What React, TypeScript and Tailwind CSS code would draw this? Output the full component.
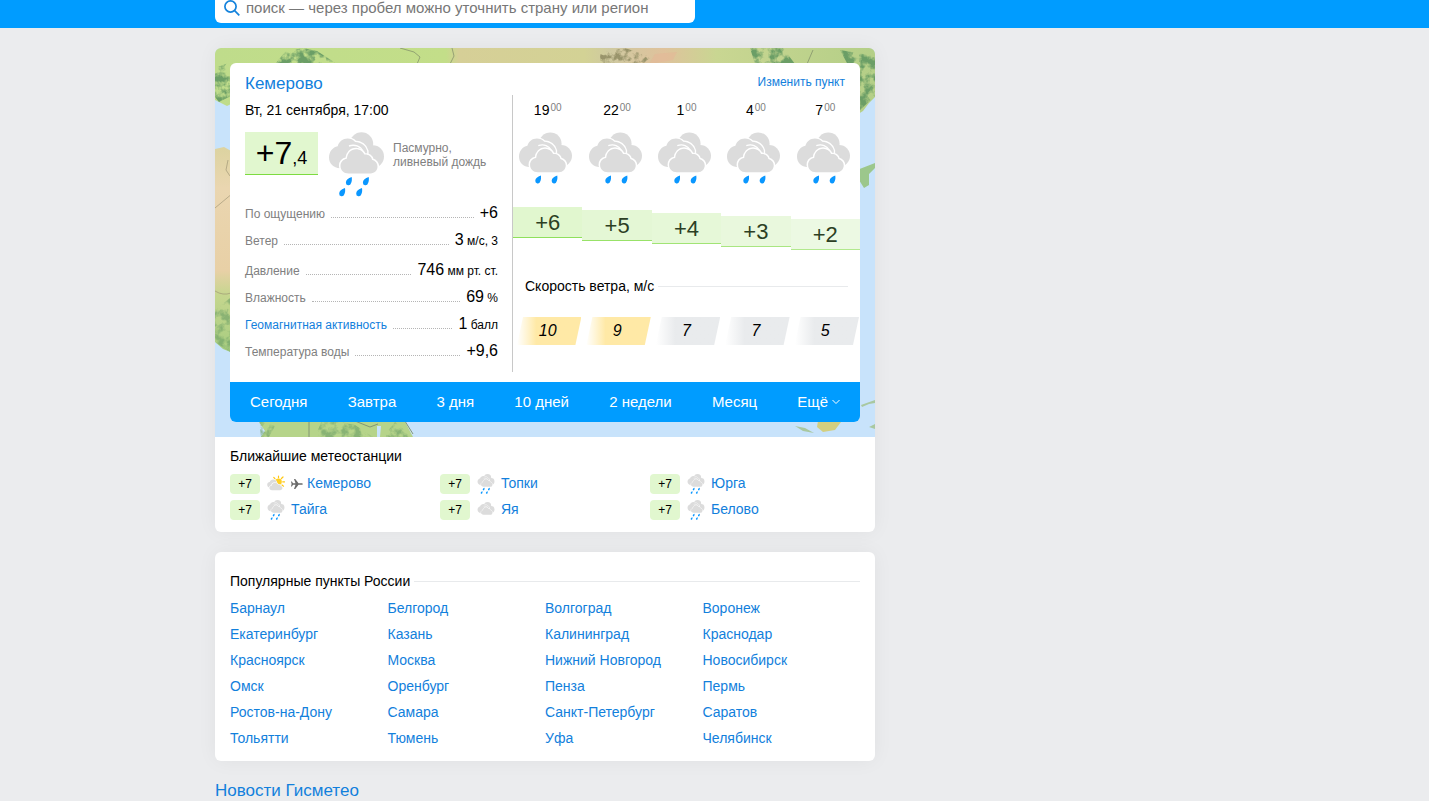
type CloudProps = { className: string; drops: 0 | 2 | 4 };

function CloudShapes() {
  return (
    <>
      <g fill="#dcdcdc">
        <circle cx="32.5" cy="12" r="11.7" />
        <circle cx="43.8" cy="24.5" r="11.2" />
        <circle cx="36" cy="22" r="10" />
      </g>
      <path
        d="M11 36.300C4.500 36 0 31.500 0 25.500C0 19.500 3.800 15.200 8.700 14.200C10 9.500 14 6.600 18.500 6.600C21.600 6.600 24.300 7.800 26.200 9.900C32 10 36.800 13.500 38.200 19L38 30L13 36.300Z"
        fill="#dcdcdc"
        stroke="#fff"
        strokeWidth="2.8"
        paintOrder="stroke"
      />
      <path
        d="M20 14C25.500 12 31.500 14 34 19.500"
        fill="none"
        stroke="#fff"
        strokeWidth="1.4"
      />
      <path
        d="M19.700 41.500C14.500 41.500 11.500 38 11.500 34C11.500 30.200 14 27.500 17.800 26.800C18.500 21 22 17.300 27 17.300C31 17.300 34 19.500 35.400 22.600C39.500 22.300 42.500 24.500 43 27.800C46.500 29 48.500 31.200 48.500 34.600C48.500 38.500 45.500 41.500 41.500 41.500Z"
        fill="#dcdcdc"
        stroke="#fff"
        strokeWidth="3.2"
        paintOrder="stroke"
      />
    </>
  );
}

const dropPlaces = [
  [22.7, 45],
  [39.7, 45],
  [16, 56],
  [33, 56],
];

function Cloud({ className, drops }: CloudProps) {
  return (
    <svg viewBox="0 0 55 65" className={className} aria-hidden="true">
      <CloudShapes />
      {dropPlaces.slice(0, drops).map(([x, y]) => (
        <path
          key={`${x}-${y}`}
          transform={`translate(${x} ${y})`}
          d="M0 0C-3.500 1.200-5.800 3-5.800 5.400A2.600 2.600 0 0 0-.7 6.300C.2 4.600.4 2.500 0 0Z"
          fill="#0a97ff"
        />
      ))}
    </svg>
  );
}

function SunCloud({ className }: { className: string }) {
  return (
    <svg viewBox="0 0 18 20" className={className} aria-hidden="true">
      <g stroke="#ffc814" strokeWidth="1.200" strokeLinecap="round">
        <path d="M11.500 2.200v1.500M6.800 3.400l1.200 1.400M16 3l-1.600 1.500M17.500 7.800h-1.800M16.500 12.200l-1.500-1.200" />
      </g>
      <circle cx="11.500" cy="7.800" r="3.300" fill="#ffcf24" />
      <path
        d="M3 13.500C1.200 13.500.2 12.300.2 10.800C.2 9.200 1.400 8.200 2.700 8.100C3.200 6.400 4.500 5.400 6.200 5.400C8 5.400 9.200 6.500 9.600 7.900L10 13.500Z"
        fill="#dcdcdc"
        stroke="#fff"
        strokeWidth="1"
        paintOrder="stroke"
      />
      <path
        d="M5 16.300C3.300 16.300 2.400 15.200 2.400 14C2.400 12.800 3.200 12 4.500 11.700C4.900 9.800 6.300 8.800 8 8.800C9.500 8.800 10.600 9.500 11.100 10.500C12.600 10.400 13.600 11.100 13.800 12.100C14.900 12.400 15.400 13.200 15.400 14.100C15.400 15.400 14.400 16.300 13 16.300Z"
        fill="#dcdcdc"
        stroke="#fff"
        strokeWidth="1.200"
        paintOrder="stroke"
      />
    </svg>
  );
}

function Plane() {
  return (
    <svg viewBox="0 0 24 20" className="h-2.5 w-3 shrink-0" aria-label="Аэропорт" role="img">
      <path
        d="M23.500 10c0-1.100-.9-1.700-2-1.700h-6.500L8.500 0H6l3 8.300H4L1.800 5H0l1.200 5L0 15h1.800L4 11.700h5L6 20h2.500l6.500-8.300h6.500c1.100 0 2-.6 2-1.700z"
        fill="#6a6a6a"
      />
    </svg>
  );
}

function MapPicture() {
  return (
    <svg
      viewBox="0 0 660 389"
      preserveAspectRatio="none"
      className="absolute inset-0 h-full w-full"
      aria-hidden="true"
    >
      <defs>
        <linearGradient id="land" x1="0" x2="1" y1="0" y2="0">
          <stop offset="0" stopColor="#bfdc8b" />
          <stop offset=".35" stopColor="#c3de89" />
          <stop offset=".37" stopColor="#d6cf97" />
          <stop offset=".56" stopColor="#d3d295" />
          <stop offset=".6" stopColor="#cfc9a0" />
          <stop offset=".68" stopColor="#dfc29c" />
          <stop offset=".76" stopColor="#c9d692" />
          <stop offset="1" stopColor="#b4cf87" />
        </linearGradient>
        <linearGradient id="west" x1="0" x2="0" y1="0" y2="1">
          <stop offset="0" stopColor="#dcd3a0" />
          <stop offset=".2" stopColor="#ead6b0" />
          <stop offset=".6" stopColor="#e8d0a6" />
          <stop offset=".72" stopColor="#c5d68e" />
          <stop offset="1" stopColor="#a6cc7f" />
        </linearGradient>
        <filter id="relief" x="0" y="0" width="1" height="1" colorInterpolationFilters="sRGB">
          <feTurbulence type="fractalNoise" baseFrequency=".11" numOctaves="4" seed="5" />
          <feColorMatrix values="0 0 0 0 .42  0 0 0 0 .62  0 0 0 0 .4  0 4 0 0 -1.600" />
          <feComposite in2="SourceGraphic" operator="in" />
        </filter>
        <filter id="umber" x="0" y="0" width="1" height="1" colorInterpolationFilters="sRGB">
          <feTurbulence type="fractalNoise" baseFrequency=".15" numOctaves="4" seed="9" />
          <feColorMatrix values="0 0 0 0 .6  0 0 0 0 .58  0 0 0 0 .42  0 4 0 0 -1.800" />
          <feComposite in2="SourceGraphic" operator="in" />
        </filter>
      </defs>
      <rect width="660" height="389" fill="#c8e3fb" />
      <path d="M0 0H660V49L654 55L648 63L640 68V30H20V54L12 58L0 52Z" fill="url(#land)" />
      <path d="M0 20L16 14V48L4 54L0 49ZM70 4L88 0L102 3L122 16H60Z" filter="url(#relief)" fill="#fff" />
      <path d="M535 0H568L580 16H540ZM625 2L660 8V48L645 62L640 30Z" filter="url(#relief)" fill="#fff" />
      <path d="M385 5L410 0L436 9L428 16H385Z" filter="url(#umber)" fill="#fff" />
      <path d="M440 6L462 4L458 12L434 16Z" fill="#e5b595" opacity=".5" />
      <path d="M185 0L199 4L205 9L202 16M237 0L239 8L235 16M598 2L592 16" fill="none" stroke="#7e8a68" strokeWidth="1" opacity=".7" />
      <path d="M0 101L9 99L18 104V305L8 301L0 294Z" fill="url(#west)" />
      <path d="M0 160L18 145M0 243Q8 248 16 245M13 112L11 122L15 128" fill="none" stroke="#97906f" strokeWidth="1" opacity=".6" />
      <path d="M0 262L15 250V304L0 294Z" filter="url(#relief)" fill="#fff" opacity=".6" />
      <path d="M42 371L188 370L198 389H46L50 383Z" fill="#b6d48a" />
      <path d="M44 372L60 378L54 389H46ZM108 370L140 377L158 389H100ZM180 374L198 389H168Z" filter="url(#relief)" fill="#fff" opacity=".6" />
      <path d="M94 370V389M140 373L155 379L163 376M188 370L198 386" fill="none" stroke="#829675" strokeWidth="1" />
      <path d="M162 378H166L165 389H162Z" fill="#c8e3fb" />
      <path d="M642 122L660 115V120L654 126V137L649 140L644 132Z" fill="#9cc78c" />
      <path d="M603 373L626 374L620 382L608 384L602 379Z" fill="#d3cf80" />
      <path d="M580 378L590 380L599 385L588 383ZM646 357L660 352V355L654 356L647 359ZM654 379L660 376V381Z" fill="#a9c8a0" />
    </svg>
  );
}

const details = [
  { label: "По ощущению", value: "+6", unit: "", row: "h-[27px]" },
  { label: "Ветер", value: "3", unit: "м/с, 3", row: "mb-[3px] h-[27px]" },
  { label: "Давление", value: "746", unit: "мм рт. ст.", row: "h-[27px]" },
  { label: "Влажность", value: "69", unit: "%", row: "h-[27px]" },
  { label: "Геомагнитная активность", value: "1", unit: "балл", row: "h-[27px]", link: true },
  { label: "Температура воды", value: "+9,6", unit: "", row: "h-[27px]" },
];

const calm = "from-white to-[#e9ebed]";
const windy = "from-white to-[#ffe9a6]";

const forecast = [
  { hour: "19", temp: "+6", wind: "10", tempClass: "border-[#8fe05c] bg-[#e1f7cf]", windClass: windy },
  { hour: "22", temp: "+5", wind: "9", tempClass: "mt-[3px] border-[#98e268] bg-[#e4f7d5]", windClass: windy },
  { hour: "1", temp: "+4", wind: "7", tempClass: "mt-[6px] border-[#a1e475] bg-[#e6f8d8]", windClass: calm },
  { hour: "4", temp: "+3", wind: "7", tempClass: "mt-[9px] border-[#a9e681] bg-[#e9f8dd]", windClass: calm },
  { hour: "7", temp: "+2", wind: "5", tempClass: "mt-[12px] border-[#b2e98e] bg-[#ecf9e3]", windClass: calm },
];

const periods = ["Сегодня", "Завтра", "3 дня", "10 дней", "2 недели", "Месяц"];

type Station = { name: string; sky: "sun" | "rain" | "cloud"; airport?: boolean };

const stations: Station[] = [
  { name: "Кемерово", sky: "sun", airport: true },
  { name: "Топки", sky: "rain" },
  { name: "Юрга", sky: "rain" },
  { name: "Тайга", sky: "rain" },
  { name: "Яя", sky: "cloud" },
  { name: "Белово", sky: "rain" },
];

const cities = [
  "Барнаул", "Белгород", "Волгоград", "Воронеж",
  "Екатеринбург", "Казань", "Калининград", "Краснодар",
  "Красноярск", "Москва", "Нижний Новгород", "Новосибирск",
  "Омск", "Оренбург", "Пенза", "Пермь",
  "Ростов-на-Дону", "Самара", "Санкт-Петербург", "Саратов",
  "Тольятти", "Тюмень", "Уфа", "Челябинск",
];

function Header() {
  return (
    <header className="h-7 overflow-hidden bg-[#009cff]">
      <div className="mx-auto flex h-full max-w-[999px] items-end pb-[5px]">
        <label className="flex h-[30px] w-full max-w-[480px] shrink-0 items-center gap-1.5 rounded-md bg-white pl-[9px]">
          <svg viewBox="0 0 16 16" className="size-4 shrink-0" fill="none" stroke="#1583dc" strokeWidth="1.7" aria-hidden="true">
            <circle cx="6.500" cy="6.500" r="5.600" />
            <path d="M10.600 10.600L15.300 15.300" />
          </svg>
          <input
            type="text"
            aria-label="Поиск"
            placeholder="поиск — через пробел можно уточнить страну или регион"
            className="min-w-0 flex-1 text-[15px] outline-none placeholder:text-[#777]"
          />
        </label>
      </div>
    </header>
  );
}

function CurrentWeather() {
  return (
    <div className="w-[283px] shrink-0 border-r border-[#c8c8c8] pr-3.5 pb-[7px] pl-[15px]">
      <p className="h-[30px] text-sm leading-[30px]">Вт, 21 сентября, 17:00</p>
      <div className="mt-[7px] flex h-[65px]">
        <div className="h-[43px] w-[73px] border-b border-[#7ddb40] bg-[#e1f7cf] text-center leading-[42px]">
          <span className="text-[32px]">+7</span>
          <span className="text-lg">,4</span>
        </div>
        <Cloud className="ml-[11px] h-[65px] w-[55px]" drops={4} />
        <p className="mt-[9px] ml-[9px] text-xs leading-[14px] text-[#808080]">
          Пасмурно,
          <br />
          ливневый дождь
        </p>
      </div>
      <dl className="mt-[3px]">
        {details.map((d) => (
          <div key={d.label} className={`flex items-baseline gap-1.5 leading-[25px] ${d.row}`}>
            <dt className="text-xs text-[#808080]">
              {d.link ? (
                <a href="#geomagnetic" className="text-[#1280dc]">{d.label}</a>
              ) : (
                d.label
              )}
            </dt>
            <span className="flex-1 border-b border-dotted border-[#b5b5b5]" />
            <dd>
              {d.value}
              {d.unit && <span className="text-xs"> {d.unit}</span>}
            </dd>
          </div>
        ))}
      </dl>
    </div>
  );
}

function Forecast() {
  return (
    <div className="min-w-0 flex-1">
      <div className="grid grid-cols-5 text-center">
        {forecast.map((f) => (
          <div key={f.hour}>
            <div className="flex h-[30px] justify-center text-sm leading-[30px]">
              {f.hour}
              <span className="ml-px text-[10px] leading-[26px] text-[#808080]">00</span>
            </div>
            <div className="mt-[7px] flex justify-center pr-1">
              <Cloud className="h-[63px] w-[53px]" drops={2} />
            </div>
          </div>
        ))}
      </div>
      <div className="mt-3 grid grid-cols-5 items-start text-center">
        {forecast.map((f) => (
          <div key={f.hour} className={`h-[31px] border-b text-[22px] leading-[31px] text-[#2c3f24] ${f.tempClass}`}>
            {f.temp}
          </div>
        ))}
      </div>
      <div className="mt-[22px] flex h-7 items-center gap-1 pr-3 pl-3 text-sm">
        <h3>Скорость ветра, м/с</h3>
        <span className="h-px flex-1 bg-[#e8eaec]" />
      </div>
      <div className="mt-[17px] grid grid-cols-5 text-center">
        {forecast.map((f) => (
          <div
            key={f.hour}
            className={`mr-[1px] ml-[4px] h-7 bg-linear-to-r to-30% pr-[3px] text-base leading-7 italic [clip-path:polygon(6px_0,100%_0,calc(100%-6px)_100%,0_100%)] ${f.windClass}`}
          >
            {f.wind}
          </div>
        ))}
      </div>
    </div>
  );
}

function StationIcon({ sky }: { sky: Station["sky"] }) {
  if (sky === "sun") return <SunCloud className="h-5 w-[18px] shrink-0" />;
  if (sky === "cloud") return <Cloud className="mt-1 h-5 w-[18px] shrink-0" drops={0} />;
  return <Cloud className="h-5 w-[18px] shrink-0" drops={4} />;
}

export default function App() {
  return (
    <div className="min-h-screen bg-[#ebecee] font-['Liberation_Sans',Arial,sans-serif] text-base text-black">
      <Header />
      <div className="mx-auto max-w-[999px]">
        <main className="w-full max-w-[660px] pt-5">
          <section className="overflow-hidden rounded-md bg-white shadow-[0_0_20px_rgba(0,0,0,0.05)]">
            <div className="relative p-[15px]">
              <MapPicture />
              <div className="relative overflow-hidden rounded-md bg-white">
                <div className="flex h-8 items-center justify-between px-[15px] pt-2.5">
                  <h1 className="text-[17px] leading-5">
                    <a href="#kemerovo" className="text-[#1280dc]">Кемерово</a>
                  </h1>
                  <a href="#change" className="pb-1 text-xs text-[#1280dc]">Изменить пункт</a>
                </div>
                <div className="flex pb-2.5">
                  <CurrentWeather />
                  <Forecast />
                </div>
                <nav className="flex h-10 items-center justify-between bg-[#009cff] px-5 text-[15px] text-white">
                  {periods.map((p) => (
                    <a key={p} href="#period">{p}</a>
                  ))}
                  <button type="button" className="flex items-center gap-1">
                    Ещё
                    <svg viewBox="0 0 8 6" className="h-1.5 w-2" fill="none" stroke="currentColor" strokeWidth="1" aria-hidden="true">
                      <path d="M.5 1L4 4.500L7.500 1" />
                    </svg>
                  </button>
                </nav>
              </div>
            </div>
            <div className="px-[15px] pt-[5px] pb-[9px] text-sm">
              <h2 className="h-[29px] leading-[29px]">Ближайшие метеостанции</h2>
              <ul className="grid grid-cols-3">
                {stations.map((s) => (
                  <li key={s.name} className="flex h-[26px] items-center">
                    <span className="w-[30px] rounded bg-[#e1f7cf] text-center text-xs leading-5">+7</span>
                    <span className="mr-1.5 ml-[7px] flex">
                      <StationIcon sky={s.sky} />
                    </span>
                    {s.airport && (
                      <span className="mr-1 flex">
                        <Plane />
                      </span>
                    )}
                    <a href="#station" className="pb-0.5 text-[#1280dc]">{s.name}</a>
                  </li>
                ))}
              </ul>
            </div>
          </section>

          <section className="mt-5 rounded-md bg-white px-[15px] pt-[15px] pb-2.5 text-sm shadow-[0_0_20px_rgba(0,0,0,0.05)]">
            <div className="flex h-7 items-center gap-1">
              <h2>Популярные пункты России</h2>
              <span className="h-px flex-1 bg-[#e8eaec]" />
            </div>
            <ul className="grid grid-cols-4">
              {cities.map((c) => (
                <li key={c} className="h-[26px] leading-[26px]">
                  <a href="#city" className="text-[#1280dc]">{c}</a>
                </li>
              ))}
            </ul>
          </section>

          <h2 className="mt-[18px] text-[17px] leading-6">
            <a href="#news" className="text-[#1280dc]">Новости Гисметео</a>
          </h2>
        </main>
      </div>
    </div>
  );
}
